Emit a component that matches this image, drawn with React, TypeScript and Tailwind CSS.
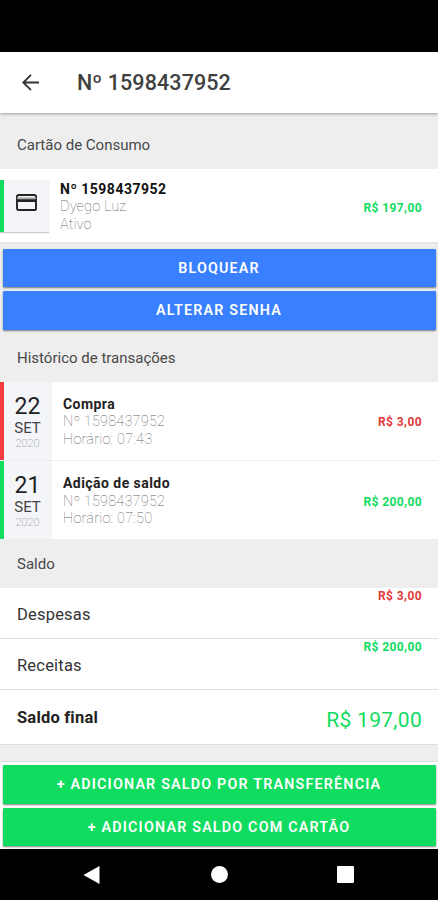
import type { ReactNode } from 'react'

type Transaction = {
    day: string
    month: string
    year: string
    title: string
    card: string
    time: string
    value: string
    income: boolean
}

const transactions: Transaction[] = [
    { day: '22', month: 'SET', year: '2020', title: 'Compra', card: 'Nº 1598437952', time: '07:43', value: 'R$ 3,00', income: false },
    { day: '21', month: 'SET', year: '2020', title: 'Adição de saldo', card: 'Nº 1598437952', time: '07:50', value: 'R$ 200,00', income: true },
]

const Header = () => (
    <header className="relative z-10 flex h-[61px] items-center bg-white pl-[19px] shadow-[0_1px_3px_rgba(0,0,0,0.35)]">
        <svg className="size-[24px]" viewBox="0 0 24 24" fill="none" stroke="#333" strokeWidth="1.8">
            <path d="M20 11.5H4.5M12 3.8L4.3 11.5l7.7 7.7" />
        </svg>
        <h1 className="ml-[34px] text-[21.5px] leading-none font-medium tracking-[0.1px] text-[#404040]">Nº 1598437952</h1>
    </header>
)

const ListHeader = ({ className, children }: { className: string; children: ReactNode }) => (
    <h2 className={`flex items-center pl-[17px] text-[15px] leading-none text-[#484848] ${className}`}>{children}</h2>
)

const ActionButton = ({ color, children }: { color: string; children: ReactNode }) => (
    <button className={`flex h-[38.5px] w-full items-center justify-center rounded-[1px] text-[14.3px] leading-none font-semibold text-white shadow-[0_1px_2px_rgba(0,0,0,0.5)] ${color}`}>
        {children}
    </button>
)

const CardItem = () => (
    <div className="flex h-[75px] items-center border-b-2 border-[#e4e4e4] bg-white pr-[16px]">
        <div className="flex h-[52px] w-[49px] items-center justify-center border-l-4 border-[#10dc60] bg-[#f4f5f8] shadow-[0_1px_1px_rgba(0,0,0,0.2)]">
            <svg className="mb-[6px] h-[17px] w-[21px]" viewBox="0 0 21 17" fill="none" stroke="#222" strokeWidth="1.9">
                <rect x="1" y="1" width="19" height="15" rx="1.6" />
                <path d="M1 4.2h19" stroke="#a8a9ab" strokeWidth="1.8" />
                <path d="M1 6.6h19" strokeWidth="2.8" />
            </svg>
        </div>
        <div className="ml-[11px] flex-1 pt-[3px] leading-[17.5px]">
            <p className="text-[14px] font-bold tracking-[0.5px] text-[#111]">Nº 1598437952</p>
            <p className="text-[14.5px] font-thin tracking-[0.15px] text-[#666]">Dyego Luz</p>
            <p className="text-[14.5px] font-thin tracking-[0.15px] text-[#666]">Ativo</p>
        </div>
        <span className="pt-[4px] text-[12px] font-bold tracking-[0.4px] text-[#10dc60]">R$ 197,00</span>
    </div>
)

const TransactionItem = ({ item }: { item: Transaction }) => (
    <li className="flex h-[78px] items-center bg-white pr-[16px]">
        <div className={`flex h-full w-[52px] flex-col items-center border-l-4 bg-[#f4f5f8] pt-[12px] pr-[1px] ${item.income ? 'border-[#10dc60]' : 'border-[#f53d3d]'}`}>
            <span className="text-[23px] leading-[25px] text-[#222]">{item.day}</span>
            <span className="text-[15px] leading-[19px] text-[#444]">{item.month}</span>
            <span className="text-[11px] leading-[12px] font-thin text-[#666]">{item.year}</span>
        </div>
        <div className="ml-[11px] flex-1 pt-[3px] leading-[17.5px]">
            <p className="text-[14px] font-bold tracking-[0.45px] text-[#222]">{item.title}</p>
            <p className="text-[14.5px] font-thin tracking-[0.2px] text-[#666]">{item.card}</p>
            <p className="text-[14.5px] font-thin tracking-[0.2px] text-[#666]">Horário: {item.time}</p>
        </div>
        <span className={`pt-[3px] text-[12px] font-bold tracking-[0.4px] ${item.income ? 'text-[#10dc60]' : 'text-[#e33a3a]'}`}>{item.value}</span>
    </li>
)

const BalanceItem = ({ label, value, color }: { label: string; value: string; color: string }) => (
    <div className="flex h-[51px] justify-between border-b border-[#dcdcdc] bg-white pr-[16px] pl-[17px]">
        <span className="self-center pt-[4px] text-[16.5px] leading-none tracking-[0.2px] text-[#333]">{label}</span>
        <span className={`pt-px text-[12px] leading-[14px] font-bold tracking-[0.4px] ${color}`}>{value}</span>
    </div>
)

const NavigationBar = () => (
    <nav className="flex h-[51px] items-center justify-between bg-black pr-[84px] pl-[83px]">
        <svg className="h-[20px] w-[17px]" viewBox="0 0 17 20" fill="#fff">
            <path d="M0.5 10L16.5 1v18z" />
        </svg>
        <div className="ml-[1px] size-[17px] rounded-full bg-white" />
        <div className="size-[17px] rounded-[1px] bg-white" />
    </nav>
)

const App = () => {
    return (
        <div className="flex h-[900px] w-[438px] flex-col overflow-hidden bg-[#eee] font-['Roboto','Liberation_Sans',sans-serif]">
            <div className="h-[52px] bg-black" />
            <Header />

            <main>
                <ListHeader className="h-[56px] pt-[8px]">Cartão de Consumo</ListHeader>
                <CardItem />
                <div className="flex flex-col gap-[4px] px-[2.5px] pt-[4.5px]">
                    <ActionButton color="bg-[#3880ff]">
                        <span className="tracking-[1.2px]">BLOQUEAR</span>
                    </ActionButton>
                    <ActionButton color="bg-[#3880ff]">
                        <span className="tracking-[1.2px]">ALTERAR SENHA</span>
                    </ActionButton>
                </div>

                <ListHeader className="h-[52px] pt-[5px]">Histórico de transações</ListHeader>
                <ul className="flex flex-col gap-[1.5px]">
                    {transactions.map((item) => (
                        <TransactionItem key={item.day} item={item} />
                    ))}
                </ul>

                <ListHeader className="h-[49px] pt-[2px]">Saldo</ListHeader>
                <BalanceItem label="Despesas" value="R$ 3,00" color="text-[#e33a3a]" />
                <BalanceItem label="Receitas" value="R$ 200,00" color="text-[#10dc60]" />
                <div className="flex h-[55px] items-center justify-between border-b border-[#ddd] bg-white pr-[16px] pl-[17px]">
                    <span className="pt-[2px] text-[16.5px] font-bold tracking-[0.2px] text-[#222]">Saldo final</span>
                    <span className="pt-[7px] text-[21px] tracking-[0.3px] text-[#10dc60]">R$ 197,00</span>
                </div>
            </main>

            <footer className="mt-auto">
                <div className="flex h-[88px] flex-col gap-[4px] border-t border-[#ddd] bg-white px-[2.5px] pt-[3px]">
                    <ActionButton color="bg-[#10dc60]">
                        <span className="tracking-[1.2px]">+ ADICIONAR SALDO POR TRANSFERÊNCIA</span>
                    </ActionButton>
                    <ActionButton color="bg-[#10dc60]">
                        <span className="tracking-[1.2px]">+ ADICIONAR SALDO COM CARTÃO</span>
                    </ActionButton>
                </div>
                <NavigationBar />
            </footer>
        </div>
    )
}

export default App
